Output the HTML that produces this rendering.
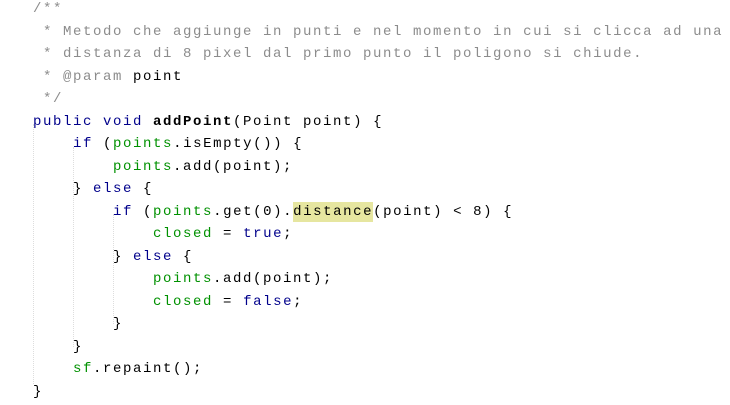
<!DOCTYPE html>
<html><head><style>
body{margin:0;background:#fff;width:730px;height:405px;overflow:hidden;position:relative}
pre{margin:0;position:absolute;left:33px;top:-2px;font-family:"Liberation Mono",monospace;font-size:14px;letter-spacing:1.6px;line-height:22.5px;color:#000}
.c{color:#8c8c8c}.k{color:#00008b}.f{color:#009100}.b{font-weight:bold}
.h{background:#e6e6a0;padding:2px 0}
.g{position:absolute;border-left:1px dotted #ddd}
</style></head><body>
<div class="g" style="left:33px;top:124px;height:260px"></div>
<div class="g" style="left:73px;top:147px;height:200px"></div>
<div class="g" style="left:113px;top:214px;height:110px"></div>
<pre><span class="c">/**
 * Metodo che aggiunge in punti e nel momento in cui si clicca ad una
 * distanza di 8 pixel dal primo punto il poligono si chiude.
 * @param</span> point
<span class="c"> */</span>
<span class="k">public void</span> <span class="b">addPoint</span>(Point point) {
    <span class="k">if</span> (<span class="f">points</span>.isEmpty()) {
        <span class="f">points</span>.add(point);
    } <span class="k">else</span> {
        <span class="k">if</span> (<span class="f">points</span>.get(0).<span class="h">distance</span>(point) &lt; 8) {
            <span class="f">closed</span> = <span class="k">true</span>;
        } <span class="k">else</span> {
            <span class="f">points</span>.add(point);
            <span class="f">closed</span> = <span class="k">false</span>;
        }
    }
    <span class="f">sf</span>.repaint();
}</pre>
</body></html>
